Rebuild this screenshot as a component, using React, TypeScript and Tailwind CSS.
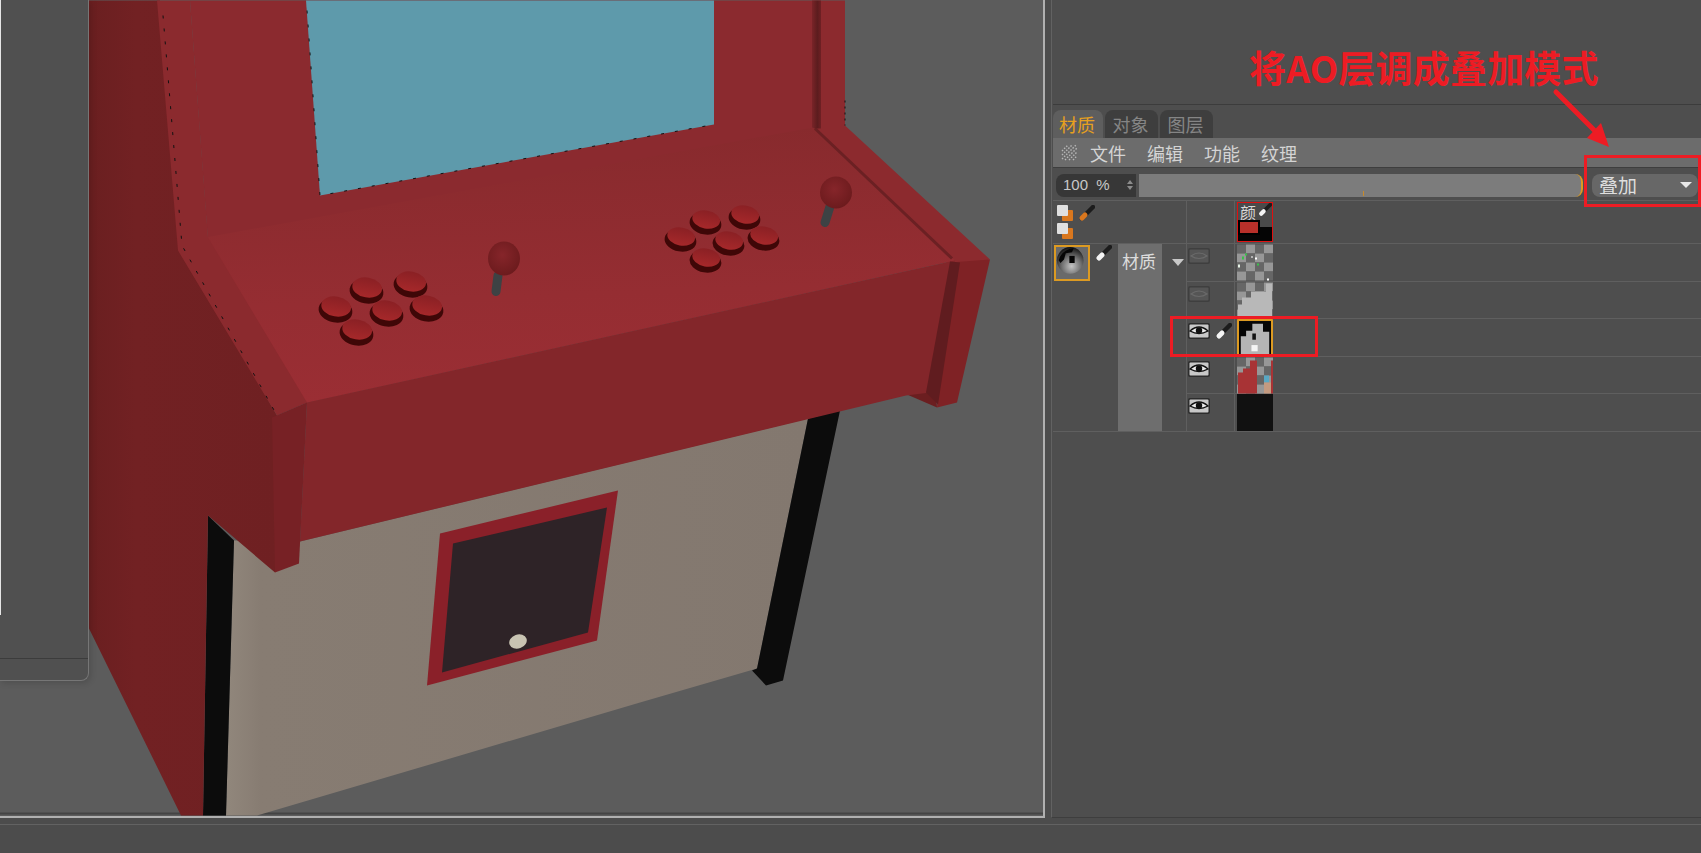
const cjk = "[font-family:'Noto_Sans_CJK_SC',sans-serif]";

function Scene() {
  const leftButtons = [
    [367, 288],
    [411, 282],
    [336, 307],
    [387, 311],
    [427, 306],
    [357, 330],
  ];
  const rightButtons = [
    [706, 220],
    [745, 215],
    [681, 237],
    [729, 241],
    [764, 236],
    [706, 258],
  ];
  const arcadeButton = (x: number, y: number, rx: number, ry: number) => (
    <g key={`${x}-${y}`} transform={`rotate(10 ${x} ${y})`}>
      <ellipse cx={x} cy={y + 3} rx={rx} ry={ry} fill="#3f0707" />
      <ellipse cx={x} cy={y - 1} rx={rx - 2} ry={ry - 2} fill="url(#btn)" />
    </g>
  );
  return (
    <svg viewBox="0 0 1043 815" className="block h-full w-full">
      <defs>
        <linearGradient id="body" x1="0" x2="1" y1="0" y2="0">
          <stop offset="0" stopColor="#6a1f20" />
          <stop offset="0.25" stopColor="#722123" />
          <stop offset="1" stopColor="#6f2022" />
        </linearGradient>
        <linearGradient id="deck" x1="0.45" x2="0.55" y1="0" y2="1">
          <stop offset="0" stopColor="#872a2d" />
          <stop offset="0.6" stopColor="#952d32" />
          <stop offset="1" stopColor="#9b2e34" />
        </linearGradient>
        <linearGradient id="cream" x1="0" x2="1" y1="0" y2="0">
          <stop offset="0" stopColor="#91877c" />
          <stop offset="0.06" stopColor="#877c72" />
          <stop offset="1" stopColor="#83786f" />
        </linearGradient>
        <linearGradient id="btn" x1="0" x2="0" y1="0" y2="1">
          <stop offset="0" stopColor="#8a2024" />
          <stop offset="1" stopColor="#a6282a" />
        </linearGradient>
        <linearGradient id="groove" x1="0" x2="1" y1="0" y2="0">
          <stop offset="0" stopColor="#7a2428" />
          <stop offset="0.6" stopColor="#5c1c1e" />
          <stop offset="1" stopColor="#6f2024" />
        </linearGradient>
        <radialGradient id="ball" cx="0.45" cy="0.4" r="0.65">
          <stop offset="0" stopColor="#86252a" />
          <stop offset="1" stopColor="#6a1a1c" />
        </radialGradient>
      </defs>

      <line x1="0" y1="813" x2="1043" y2="813" stroke="#444444" strokeWidth="2" />

      {/* cabinet base */}
      <polygon points="234,540 300,541 808,418 757,668 640,702 257,815 226,815" fill="url(#cream)" />
      <polygon points="208,515 234,540 226,815 203,815" fill="#0c0c0c" />
      <polygon points="808,418 840,410 783,680 766,685 752,670 757,668" fill="#0c0c0c" />

      {/* coin door */}
      <polygon points="440,533 618,490 597,640 427,685" fill="#8a2029" />
      <polygon points="453,543 607,507 588,632 442,672" fill="#2e2327" />
      <ellipse cx="518" cy="641" rx="9" ry="7" transform="rotate(-20 518 641)" fill="#c8c3b2" />

      {/* upper front and screen */}
      <polygon points="190,0 820,0 820,130 208,240" fill="#8b2a2f" />
      <polygon points="306,0 714,0 714,124 320,195" fill="#5e9aab" />
      <polyline points="307,10 320,195 714,124" fill="none" stroke="#111" strokeWidth="1" strokeDasharray="3 11" />

      {/* control deck */}
      <polygon points="820,0 845,0 845,125 990,259 950,266 813,127" fill="#8c2a2e" />
      <polygon points="812,0 821,0 821,128 812,128" fill="url(#groove)" />
      <polygon points="200,238 813,127 955,260 300,404" fill="url(#deck)" />
      <polyline points="815,128 952,258" fill="none" stroke="#651e21" strokeWidth="3" strokeOpacity="0.85" />
      <line x1="845" y1="100" x2="845" y2="125" stroke="#111" strokeWidth="1" strokeDasharray="2 4" />

      {leftButtons.map(([x, y]) => arcadeButton(x, y, 17, 12))}
      {rightButtons.map(([x, y]) => arcadeButton(x, y, 16, 11))}
      <line x1="498" y1="275" x2="496" y2="291" stroke="#3d4244" strokeWidth="9" strokeLinecap="round" />
      <ellipse cx="504" cy="258" rx="16" ry="17" fill="url(#ball)" />
      <line x1="830" y1="206" x2="825" y2="222" stroke="#3d4244" strokeWidth="9" strokeLinecap="round" />
      <ellipse cx="836" cy="192" rx="16" ry="16" fill="url(#ball)" />

      {/* front band and right end cap */}
      <polygon points="907,394 935,385 937,407" fill="#6b1e20" />
      <polygon points="950,262 990,259 957,402 937,407" fill="#7f2225" />
      <polygon points="307,402 955,260 930,392 906,395 300,541" fill="#83262a" />
      <polygon points="950,261 960,262 938,404 926,392" fill="#601c1f" />

      {/* left side */}
      <polygon points="89,0 160,0 182,250 277,415 275,572 208,515 203,815 181,815 89,628" fill="url(#body)" />
      <polygon points="157,0 190,0 208,237 307,402 277,415 178,250" fill="#8b2a2e" />
      <polygon points="272,417 307,402 299,563 275,572" fill="#772125" />
      <polyline points="163,15 182,245 277,415" fill="none" stroke="#111" strokeWidth="1" strokeDasharray="3 10" />
    </svg>
  );
}

function Brush({ tip = "#f4f4f4", className }: { tip?: string; className: string }) {
  return (
    <svg viewBox="0 0 18 18" className={className}>
      <line x1="9" y1="9" x2="16" y2="2" stroke="#1c1c1c" strokeWidth="4.5" strokeLinecap="round" />
      <line x1="3" y1="15" x2="8" y2="10" stroke="#3a3a3a" strokeWidth="2" />
      <line x1="5" y1="13" x2="8" y2="10" stroke={tip} strokeWidth="5" strokeLinecap="round" />
    </svg>
  );
}

function LinkedSquare() {
  return (
    <svg viewBox="0 0 16 16" className="h-4 w-4">
      <rect x="5" y="5" width="11" height="11" rx="1" fill="#d9771e" />
      <rect x="0" y="0" width="11" height="11" rx="1" fill="#e0e0e0" />
    </svg>
  );
}

function Eye({ on }: { on: boolean }) {
  return (
    <svg viewBox="0 0 22 16" className="h-4 w-[22px]">
      <rect width="22" height="16" rx="2" fill={on ? "#2d2d2d" : "#3f3f3f"} />
      <rect x="1.5" y="1.5" width="19" height="13" rx="1" fill={on ? "#c8c8c8" : "#555555"} />
      {on ? (
        <>
          <path d="M2 8 Q11 0 20 8 Q11 13 2 8Z" fill="#ececec" stroke="#111" strokeWidth="1.4" />
          <circle cx="11" cy="7.5" r="3.2" fill="#111" />
        </>
      ) : (
        <path d="M3 8 Q11 2 19 8 Q11 13 3 8Z" fill="none" stroke="#6a6a6a" strokeWidth="1.2" />
      )}
    </svg>
  );
}

function Checker({ children }: { children?: React.ReactNode }) {
  const cells = [];
  for (let y = 0; y < 4; y++) {
    for (let x = 0; x < 4; x++) {
      cells.push(
        <rect
          key={`${x}-${y}`}
          x={x * 9}
          y={y * 9}
          width="9"
          height="9"
          fill={(x + y) % 2 === 0 ? "#666666" : "#979797"}
        />,
      );
    }
  }
  return (
    <svg viewBox="0 0 36 36" className="block h-[37px] w-9">
      {cells}
      {children}
    </svg>
  );
}

function Thumb({ kind }: { kind: number }) {
  if (kind === 0) {
    return (
      <Checker>
        <rect x="5" y="12" width="2" height="3" fill="#39c24a" />
        <rect x="8" y="9" width="2" height="2" fill="#39c24a" />
        <rect x="20" y="19" width="2" height="2" fill="#39c24a" />
        <rect x="1" y="20" width="2" height="3" fill="#e8f5e8" />
        <rect x="14" y="12" width="2" height="1" fill="#fff" />
        <rect x="18" y="13" width="2" height="2" fill="#fff" />
        <rect x="30" y="34" width="2" height="2" fill="#fff" />
      </Checker>
    );
  }
  if (kind === 1) {
    return (
      <Checker>
        <path d="M1 36 V22 H5 V15 H14 V9 H29 V1 H35 V36Z" fill="#b8b8b8" />
      </Checker>
    );
  }
  if (kind === 2) {
    return (
      <svg viewBox="0 0 36 37" className="block h-[37px] w-9 rounded-[1px] border-2 border-[#dc9a22]">
        <rect width="36" height="37" fill="#060606" />
        <path d="M2 37 V17 H8 V11 H15 V3 H27 V12 H34 V37Z" fill="#b4b4b4" />
        <rect x="15" y="14" width="4" height="7" fill="#111" />
        <rect x="14" y="27" width="7" height="7" fill="#f4f4f4" />
      </svg>
    );
  }
  if (kind === 3) {
    return (
      <Checker>
        <path d="M1 36 V15 H6 V11 H13 V3 H20 V36Z" fill="#a83335" />
        <rect x="34" y="3" width="2" height="33" fill="#a83335" />
        <rect x="27" y="18" width="5" height="7" fill="#58a8c4" />
        <rect x="27" y="25" width="7" height="11" fill="#c49a80" />
      </Checker>
    );
  }
  return <div className="h-[37px] w-9 bg-[#111111]" />;
}

function Layer({ on, kind, brush }: { on: boolean; kind: number; brush?: boolean }) {
  return (
    <div className="flex h-[37.6px] border-b border-[#5f5f5f]">
      <div className="flex w-12 items-start gap-[4px] border-r border-[#5f5f5f] pl-[1px] pt-[4px]">
        <Eye on={on} />
        {brush && <Brush className="h-[18px] w-[18px]" />}
      </div>
      <div className="pl-[2px]">
        <Thumb kind={kind} />
      </div>
    </div>
  );
}

function ColorThumb() {
  return (
    <div className="relative h-10 w-9 overflow-hidden border border-[#e01010] bg-[#050505]">
      <div className="absolute inset-x-0 top-0 h-6 bg-[#4a4a4a]" />
      <span className={`absolute left-[2px] top-0 text-[16px] leading-[18px] text-[#d8d8d8] ${cjk}`}>颜</span>
      <Brush className="absolute right-0 top-0 h-[15px] w-[15px]" />
      <div className="absolute left-0 top-[17px] h-[15px] w-[22px] border-2 border-black bg-[#b8302a]" />
    </div>
  );
}

export default function App() {
  const menus = ["文件", "编辑", "功能", "纹理"];
  return (
    <div className={`flex h-[853px] w-[1701px] flex-col overflow-hidden bg-[#4c4c4c] ${cjk}`}>
      <div className="flex h-[818px]">
        {/* viewport */}
        <div className="relative h-full w-[1045px] border-b-2 border-r-2 border-[#b0b0b0] bg-[#5c5c5c]">
          <Scene />
          <div className="absolute left-0 top-0 flex h-[681px] w-[89px] flex-col justify-end rounded-br-lg border-b border-r border-[#767676] bg-[#505050] shadow-[2px_2px_6px_rgba(0,0,0,0.15)]">
            <div className="absolute left-0 top-0 h-[615px] w-[1px] bg-[#e6e6e6]" />
            <div className="mb-[21px] h-[1px] bg-[#3c3c3c]" />
          </div>
        </div>

        {/* material panel */}
        <div className="relative w-[656px] pl-[6px]">
          <div className="flex h-full flex-col border-b border-l border-b-[#3e3e3e] border-l-[#626262] bg-[#4e4e4e] pl-[1px]">
            <div className="flex h-[105px] border-b border-[#3c3c3c] pl-[196px] pt-[44px]">
              <span className="whitespace-nowrap text-[37px] font-bold leading-[46px] tracking-[0.2px] text-[#ed1c24]">
                将AO层调成叠加模式
              </span>
            </div>

            {/* tabs */}
            <div className="mt-[5px] flex h-[28px] gap-[2px]">
              <div className="flex w-[50px] items-center justify-center rounded-t-lg bg-[#5e5e5e] pr-[2px] text-[18px] text-[#e6a020]">
                材质
              </div>
              <div className="flex w-[53px] items-center justify-center rounded-t-lg bg-[#3e3e3e] pr-[2px] text-[18px] text-[#858585]">
                对象
              </div>
              <div className="flex w-[53px] items-center justify-center rounded-t-lg bg-[#3e3e3e] pr-[2px] text-[18px] text-[#858585]">
                图层
              </div>
            </div>

            {/* menu bar */}
            <div className="flex h-[29px] items-center gap-[21px] bg-[#6c6c6c] pl-[8px] text-[18px] text-[#d4d4d4]">
              <svg width="17" height="17" viewBox="0 0 17 17" className="mr-[-9px]">
                <path d="M1 15 L15 1 M1 11 L11 1 M1 7 L7 1 M4 16 L16 4 M8 16 L16 8 M12 16 L16 12" stroke="#b8b8b8" strokeWidth="1.4" strokeDasharray="1.5 1.5" />
              </svg>
              {menus.map((m) => (
                <span key={m} className="w-9 text-center leading-none">
                  {m}
                </span>
              ))}
            </div>

            {/* blend row */}
            <div className="flex h-[33px] items-center border-t border-[#3e3e3e] pl-[3px] pt-[2px]">
              <div className="flex h-[23px] w-[80px] items-center justify-between rounded-l-lg bg-[#373737] pl-[7px] pr-[3px] font-['Liberation_Sans',sans-serif] text-[15px] text-[#c8c8c8]">
                <span className="whitespace-pre">100  %</span>
                <span className="flex flex-col gap-[2px]">
                  <span className="h-0 w-0 border-x-[3px] border-b-[4px] border-x-transparent border-b-[#8c8c8c]" />
                  <span className="h-0 w-0 border-x-[3px] border-t-[4px] border-x-transparent border-t-[#8c8c8c]" />
                </span>
              </div>
              <div className="relative ml-[3px] h-[23px] w-[444px] rounded-r-lg border-r-2 border-[#dc9a22] bg-[#7c7c7c]">
                <div className="absolute left-[224px] top-[17px] h-[5px] w-[1px] bg-[#c88a2a]" />
              </div>
              <div className="ml-[9px] flex h-[23px] w-[106px] items-center justify-between rounded-lg bg-[#676767] pl-[7px] pr-[6px] text-[19px] text-[#dedede]">
                <span>叠加</span>
                <span className="h-0 w-0 border-x-[6px] border-t-[6px] border-x-transparent border-t-[#e8e8e8]" />
              </div>
            </div>

            {/* layer table */}
            <div className="flex h-[44px] border-y border-[#5f5f5f]">
              <div className="flex w-[134px] items-start gap-[4px] border-r border-[#5f5f5f] pl-[4px] pt-[4px]">
                <div className="flex flex-col gap-[2px]">
                  <LinkedSquare />
                  <LinkedSquare />
                </div>
                <Brush tip="#d9771e" className="h-[18px] w-[18px]" />
              </div>
              <div className="w-12 border-r border-[#5f5f5f]" />
              <div className="pl-[2px] pt-[1px]">
                <ColorThumb />
              </div>
            </div>
            <div className="flex h-[188px] border-b border-[#5f5f5f]">
              <div className="flex w-[65px] items-start gap-[4px] pl-[1px] pt-[1px]">
                <svg viewBox="0 0 36 36" className="h-9 w-9 shrink-0 border-2 border-[#dc9a22] bg-[#6a6a6a]">
                  <defs>
                    <radialGradient id="sphere" cx="0.55" cy="0.72" r="0.72">
                      <stop offset="0" stopColor="#c4c4c4" />
                      <stop offset="0.5" stopColor="#707070" />
                      <stop offset="1" stopColor="#0e0e0e" />
                    </radialGradient>
                  </defs>
                  <circle cx="16" cy="15" r="15" fill="url(#sphere)" />
                  <path d="M3 15 Q6 3 20 1 L18 6 L11 7 L9 14 L5 18Z" fill="#050505" />
                  <rect x="15" y="10" width="6" height="8" fill="#050505" />
                </svg>
                <Brush className="h-[18px] w-[18px] shrink-0" />
              </div>
              <div className="w-[44px] bg-[#6e6e6e] pl-[4px] pt-[5px] text-[17px] leading-6 text-[#dcdcdc]">材质</div>
              <div className="w-[25px] border-r border-[#5f5f5f] pl-[10px] pt-[15px]">
                <div className="h-0 w-0 border-x-[6px] border-t-[7px] border-x-transparent border-t-[#c8c8c8]" />
              </div>
              <div className="flex-1">
                <Layer on={false} kind={0} />
                <Layer on={false} kind={1} />
                <Layer on kind={2} brush />
                <Layer on kind={3} />
                <div className="flex h-[37.6px]">
                  <div className="w-12 border-r border-[#5f5f5f] pl-[1px] pt-[4px]">
                    <Eye on />
                  </div>
                  <div className="pl-[2px]">
                    <Thumb kind={4} />
                  </div>
                </div>
              </div>
            </div>
          </div>

          {/* annotations */}
          <svg width="65" height="62" viewBox="0 0 65 62" className="absolute left-[505px] top-[88px]">
            <line x1="6" y1="4" x2="47" y2="45" stroke="#ed1c24" strokeWidth="5" strokeLinecap="round" />
            <polygon points="59,59 51,35 37,50" fill="#ed1c24" />
          </svg>
          <div className="absolute left-[539px] top-[155px] h-[52px] w-[117px] border-[3px] border-[#ed1c24]" />
          <div className="absolute left-[125px] top-[316px] h-[41px] w-[148px] border-[3px] border-[#ed1c24]" />
        </div>
      </div>

      {/* status bar */}
      <div className="mt-[6px] h-[29px] border-t border-[#626262] bg-[#4c4c4c]" />
    </div>
  );
}
